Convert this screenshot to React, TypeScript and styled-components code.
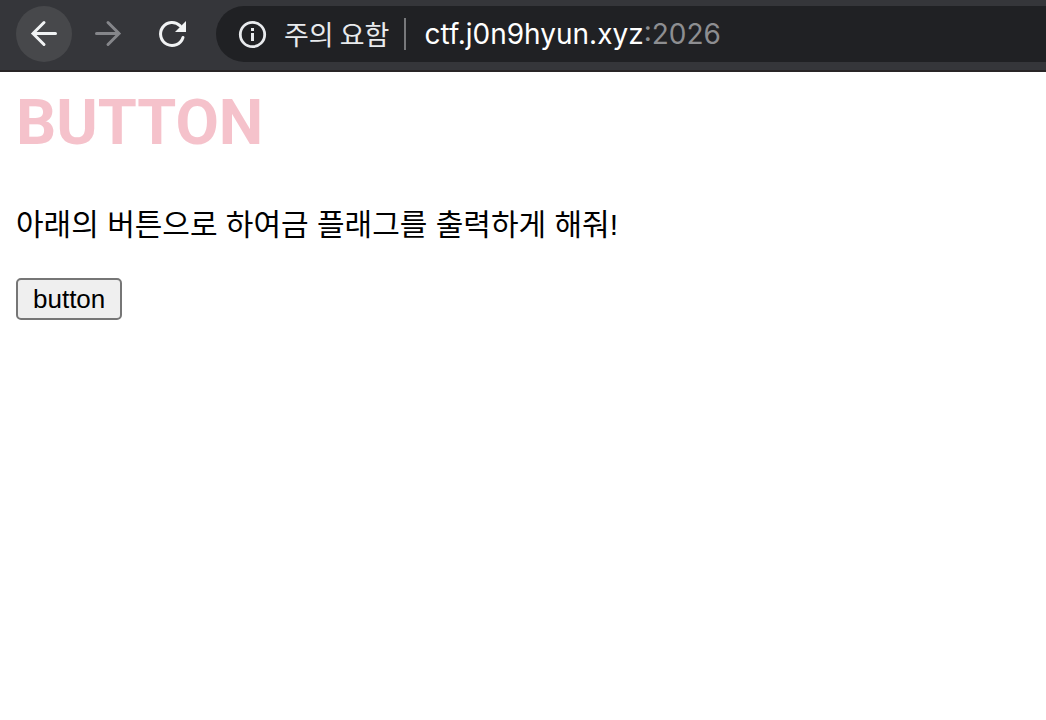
import React from "react";
import styled, { createGlobalStyle } from "styled-components";

const GlobalStyle = createGlobalStyle`
  * { box-sizing: border-box; }
  body {
    margin: 0;
    background: #fff;
    color: #000;
    font-family: Roboto, "Noto Sans CJK KR", sans-serif;
  }
`;

const Toolbar = styled.header`
  display: flex;
  align-items: center;
  height: 72px;
  padding: 0 0 2px 16px;
  background: #35363a;
  border-bottom: 2px solid #292526;
`;

const NavGroup = styled.nav`
  display: flex;
  gap: 8px;
  margin-right: 16px;
`;

const NavButton = styled.button<{ $active?: boolean }>`
  display: grid;
  place-items: center;
  width: 56px;
  height: 56px;
  padding: 0;
  border: 0;
  border-radius: 50%;
  background: ${(p) => (p.$active ? "#47484b" : "transparent")};
  color: #f1f3f4;

  &:disabled {
    color: #85868a;
  }
`;

const AddressBar = styled.div`
  display: flex;
  flex: 1;
  align-items: center;
  min-width: 0;
  height: 56px;
  padding-left: 20px;
  border-radius: 28px 0 0 28px;
  background: #202124;
  font-family: Inter, sans-serif;
  font-size: 28px;
  white-space: nowrap;
`;

const SecurityButton = styled.button`
  display: flex;
  align-items: center;
  gap: 16px;
  padding: 0;
  border: 0;
  background: none;
  color: #e8eaed;
  font-family: "Noto Sans CJK KR", sans-serif;
  font-size: 27px;
  line-height: 32px;
`;

const Divider = styled.span`
  width: 2px;
  height: 32px;
  margin: 0 18px 0 15px;
  background: #77787b;
`;

const HostInput = styled.input`
  field-sizing: content;
  min-width: 0;
  padding: 0;
  border: 0;
  outline: 0;
  background: none;
  color: #fff;
  font: inherit;
`;

const Port = styled.span`
  color: #8d8e91;
`;

const Page = styled.main`
  padding: 12px 16px;
`;

const Title = styled.h1`
  margin: 0 0 40px;
  color: #f5c2cb;
  font-size: 63px;
  font-weight: 700;
  line-height: 78px;
`;

const Message = styled.p`
  margin: 0 0 30px;
  font-family: "Liberation Sans", "Noto Sans CJK KR", sans-serif;
  font-size: 30px;
  line-height: 46px;
`;

const ActionButton = styled.button`
  display: block;
  height: 42px;
  padding: 0 15px;
  border: 2px solid #767676;
  border-radius: 5px;
  background: #efefef;
  color: #000;
  font-family: "Liberation Sans", sans-serif;
  font-size: 26px;
  line-height: 38px;
`;

const BackIcon = () => (
  <svg width="32" height="32" viewBox="0 0 32 32" fill="none" stroke="currentColor" strokeWidth="3" strokeLinecap="round" aria-hidden="true">
    <path d="M27.5 15.5H5M16 4.5 5 15.5 16 26.5" />
  </svg>
);

const ForwardIcon = () => (
  <svg width="32" height="32" viewBox="0 0 32 32" fill="none" stroke="currentColor" strokeWidth="3" strokeLinecap="round" aria-hidden="true">
    <path d="M4.5 15.5H27M16 4.5 27 15.5 16 26.5" />
  </svg>
);

const ReloadIcon = () => (
  <svg width="32" height="32" viewBox="0 0 32 32" fill="none" aria-hidden="true">
    <path d="M27 19.5A11.5 11.5 0 1 1 24.2 7.9" stroke="currentColor" strokeWidth="3" strokeLinecap="round" />
    <path d="M30 3v11H19z" fill="currentColor" />
  </svg>
);

const InfoIcon = () => (
  <svg width="32" height="32" viewBox="0 0 32 32" fill="none" aria-hidden="true">
    <circle cx="16.5" cy="16.5" r="12.2" stroke="currentColor" strokeWidth="2.8" />
    <path d="M15 10h3v3h-3zM15 15h3v8h-3z" fill="currentColor" />
  </svg>
);

export default function App() {
  return (
    <>
      <GlobalStyle />
      <Toolbar>
        <NavGroup aria-label="Navigation">
          <NavButton $active type="button" aria-label="Back"><BackIcon /></NavButton>
          <NavButton disabled type="button" aria-label="Forward"><ForwardIcon /></NavButton>
          <NavButton type="button" aria-label="Reload"><ReloadIcon /></NavButton>
        </NavGroup>
        <AddressBar>
          <SecurityButton type="button"><InfoIcon />주의 요함</SecurityButton>
          <Divider />
          <HostInput type="text" aria-label="Address" defaultValue="ctf.j0n9hyun.xyz" />
          <Port>:2026</Port>
        </AddressBar>
      </Toolbar>
      <Page>
        <Title>BUTTON</Title>
        <Message>아래의 버튼으로 하여금 플래그를 출력하게 해줘!</Message>
        <ActionButton type="button">button</ActionButton>
      </Page>
    </>
  );
}
